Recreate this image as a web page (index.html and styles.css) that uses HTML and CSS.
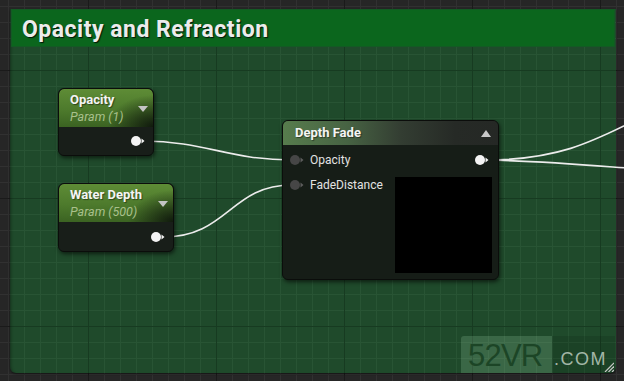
FILE: index.html
```html
<!DOCTYPE html>
<html>
<head>
<meta charset="utf-8">
<link rel="stylesheet" href="styles.css">
</head>
<body>
<div class="graph">
  <section class="comment">
    <header class="comment-title">Opacity and Refraction</header>
  </section>

  <svg class="wires" width="624" height="381" viewBox="0 0 624 381">
    <path d="M143,141 C205,141 228,160 292,160"/>
    <path d="M163,237 C228,237 230,185 292,185"/>
    <path d="M486,160 C560,160 596,140 640,118"/>
    <path d="M486,160 C545,161 598,166 640,169"/>
  </svg>

  <div class="node param n-opacity">
    <div class="node-head">
      <div class="head-text">
        <div class="node-title">Opacity</div>
        <div class="node-sub">Param (1)</div>
      </div>
      <span class="tri-down"></span>
    </div>
    <div class="node-body out-only">
      <svg class="pin on" width="14" height="10" viewBox="0 0 14 10"><circle cx="5" cy="5" r="5"/><polygon points="10.5,2.5 13.5,5 10.5,7.5"/></svg>
    </div>
  </div>

  <div class="node param n-water">
    <div class="node-head">
      <div class="head-text">
        <div class="node-title">Water Depth</div>
        <div class="node-sub">Param (500)</div>
      </div>
      <span class="tri-down"></span>
    </div>
    <div class="node-body out-only">
      <svg class="pin on" width="14" height="10" viewBox="0 0 14 10"><circle cx="5" cy="5" r="5"/><polygon points="10.5,2.5 13.5,5 10.5,7.5"/></svg>
    </div>
  </div>

  <div class="node n-fade">
    <div class="node-head fade-head">
      <div class="node-title">Depth Fade</div>
      <span class="tri-up"></span>
    </div>
    <div class="node-body fade-body">
      <div class="in-row">
        <svg class="pin off" width="14" height="10" viewBox="0 0 14 10"><circle cx="5" cy="5" r="5"/><polygon points="10.5,2.5 13.5,5 10.5,7.5"/></svg>
        <span class="pin-label">Opacity</span>
      </div>
      <svg class="pin on out-pin" width="14" height="10" viewBox="0 0 14 10"><circle cx="5" cy="5" r="5"/><polygon points="10.5,2.5 13.5,5 10.5,7.5"/></svg>
      <div class="in-row">
        <svg class="pin off" width="14" height="10" viewBox="0 0 14 10"><circle cx="5" cy="5" r="5"/><polygon points="10.5,2.5 13.5,5 10.5,7.5"/></svg>
        <span class="pin-label">FadeDistance</span>
      </div>
      <div class="preview"></div>
    </div>
  </div>

  <div class="watermark">
    <span class="wm-main">52VR</span>
    <span class="wm-com">.COM</span>
  </div>

  <svg class="grip" width="12" height="12" viewBox="0 0 12 12">
    <line x1="3" y1="12" x2="12" y2="3"/>
    <line x1="6.5" y1="12" x2="12" y2="6.5"/>
    <line x1="10" y1="12" x2="12" y2="10"/>
  </svg>
</div>
</body>
</html>
```

FILE: styles.css
```css
* { box-sizing: border-box; }

html, body {
  margin: 0;
  padding: 0;
}

body {
  width: 624px;
  height: 381px;
  overflow: hidden;
  font-family: Roboto, "Liberation Sans", sans-serif;
  background-color: #262626;
  background-image:
    linear-gradient(to right, #1a1a1a 1px, transparent 1px),
    linear-gradient(to bottom, #1a1a1a 1px, transparent 1px),
    linear-gradient(to right, #313131 1px, transparent 1px),
    linear-gradient(to bottom, #313131 1px, transparent 1px);
  background-size: 128px 128px, 128px 128px, 16px 16px, 16px 16px;
  background-position: 88px 0, 0 70px, 8px 0, 0 6px;
  background-attachment: fixed;
}

.graph {
  position: relative;
  width: 624px;
  height: 381px;
  padding: 9px 8px 8px 10px;
}

.comment {
  width: 606px;
  height: 364px;
  padding: 1px 2px 0;
  border-radius: 0 0 6px 6px;
  background-color: #1f4a2b;
  background-image:
    linear-gradient(to right, #173b21 1px, transparent 1px),
    linear-gradient(to bottom, #173b21 1px, transparent 1px),
    linear-gradient(to right, #285434 1px, transparent 1px),
    linear-gradient(to bottom, #285434 1px, transparent 1px);
  background-size: 128px 128px, 128px 128px, 16px 16px, 16px 16px;
  background-position: 88px 0, 0 70px, 8px 0, 0 6px;
  background-attachment: fixed;
  box-shadow: inset 3px 0 3px -2px rgba(0,0,0,0.35), 0 1px 2px rgba(0,0,0,0.5);
}

.comment-title {
  height: 36px;
  background: #0b661d;
  color: #ececec;
  font-weight: 700;
  font-size: 23px;
  letter-spacing: 0.5px;
  line-height: 33px;
  padding: 3px 0 0 10px;
  text-shadow: 1px 1px 1px rgba(0,0,0,0.8);
  box-shadow: 0 0 0 1px #135a24;
}

.wires {
  position: absolute;
  left: 0;
  top: 0;
}
.wires path {
  fill: none;
  stroke: #ececec;
  stroke-width: 1.6;
}

.node {
  position: absolute;
  display: flex;
  flex-direction: column;
  border: 1px solid #0b0d0b;
  border-radius: 6px;
  background: #161c17;
  box-shadow: 1px 2px 4px rgba(0,0,0,0.6);
  overflow: hidden;
}

.n-opacity { left: 58px; top: 88px; width: 96px; height: 68px; }
.n-water { left: 58px; top: 183px; width: 116px; height: 69px; }
.n-fade { left: 282px; top: 120px; width: 217px; height: 160px; }

.node-head {
  display: flex;
  justify-content: space-between;
  align-items: flex-start;
}

.param .node-head {
  height: 38px;
  padding: 3px 5px 0 11px;
  background:
    radial-gradient(ellipse 45px 32px at 100% 100%, rgba(14,22,12,0.95), rgba(14,22,12,0) 100%),
    linear-gradient(to bottom, #5e8c36 0%, #4d7a2c 55%, #3b6322 100%);
  border-radius: 5px 5px 0 0;
}

.node-title {
  color: #f4f4f4;
  font-weight: 700;
  font-size: 13px;
  line-height: 15px;
  text-shadow: 1px 1px 1px rgba(0,0,0,0.45);
  white-space: nowrap;
}

.node-sub {
  margin-top: 2px;
  color: #a9c08c;
  font-style: italic;
  font-size: 12.5px;
  line-height: 15px;
  white-space: nowrap;
}

.tri-down {
  margin-top: 14px;
  width: 0;
  height: 0;
  border-left: 5.5px solid transparent;
  border-right: 5.5px solid transparent;
  border-top: 6px solid #c4c4c4;
}

.tri-up {
  margin-top: 9px;
  width: 0;
  height: 0;
  border-left: 5px solid transparent;
  border-right: 5px solid transparent;
  border-bottom: 7px solid #c8c8c8;
}

.node-body {
  flex: 1;
  background: #181e19;
}

.out-only {
  display: flex;
  justify-content: flex-end;
  align-items: center;
  padding-right: 8px;
}

.pin.on circle, .pin.on polygon { fill: #f4f4f4; }
.pin.off circle { fill: #464646; }
.pin.off polygon { fill: #5c5c5c; }

.fade-head {
  height: 24px;
  padding: 0 7px 0 12px;
  align-items: flex-start;
  background: linear-gradient(to right, #577c4d 0%, #476343 30%, #333d32 55%, #262a26 80%, #252825 100%);
}
.fade-head .node-title {
  line-height: 24px;
}

.fade-body {
  display: grid;
  grid-template-columns: 1fr auto;
  grid-template-rows: 16px 96px;
  row-gap: 9px;
  padding: 7px 6px 6px 7px;
  background: #161d17;
}

.in-row {
  display: flex;
  align-items: center;
  height: 16px;
  gap: 6px;
  align-self: start;
}

.pin-label {
  color: #e2e2e2;
  font-size: 12px;
  line-height: 16px;
}

.out-pin {
  justify-self: end;
  align-self: center;
  margin-right: 3px;
}

.preview {
  width: 97px;
  height: 96px;
  background: #000;
}

.watermark {
  position: absolute;
  left: 461px;
  top: 336px;
  width: 154px;
  height: 37px;
  display: flex;
  font-family: "Liberation Sans", Arial, sans-serif;
}

.wm-main {
  width: 91px;
  padding-left: 7px;
  background: rgba(170, 220, 180, 0.2);
  border-radius: 3px 0 0 0;
  color: #1c4526;
  font-size: 31px;
  line-height: 40px;
  letter-spacing: -0.8px;
}

.wm-com {
  flex: 1;
  padding-left: 2px;
  background: rgba(0, 0, 0, 0.1);
  color: #a2b6a6;
  font-size: 18px;
  line-height: 46px;
  letter-spacing: 1.5px;
}

.grip {
  position: absolute;
  left: 602px;
  top: 360px;
}
.grip line {
  stroke: #c8c8c8;
  stroke-width: 1.2;
}
```
